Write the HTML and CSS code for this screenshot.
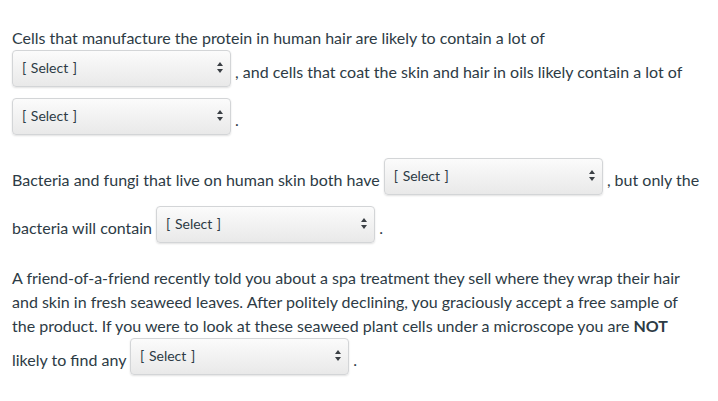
FILE: index.html
```html
<!DOCTYPE html>
<html lang="en">
<head>
<meta charset="utf-8">
<title>Question</title>
<link rel="stylesheet" href="styles.css">
</head>
<body>
<div class="question">
  <p>Cells that manufacture the protein in human hair are likely to contain a lot of <span class="select"><span class="select-label">[ Select ]</span><svg class="arrows" width="6" height="11" viewBox="0 0 6 11"><path d="M3 0L6 4H0Z"/><path d="M0 7H6L3 11Z"/></svg></span> , and cells that coat the skin and hair in oils likely contain a lot of <span class="select"><span class="select-label">[ Select ]</span><svg class="arrows" width="6" height="11" viewBox="0 0 6 11"><path d="M3 0L6 4H0Z"/><path d="M0 7H6L3 11Z"/></svg></span> .</p>
  <p>Bacteria and fungi that live on human skin both have <span class="select"><span class="select-label">[ Select ]</span><svg class="arrows" width="6" height="11" viewBox="0 0 6 11"><path d="M3 0L6 4H0Z"/><path d="M0 7H6L3 11Z"/></svg></span> , but only the bacteria will contain <span class="select"><span class="select-label">[ Select ]</span><svg class="arrows" width="6" height="11" viewBox="0 0 6 11"><path d="M3 0L6 4H0Z"/><path d="M0 7H6L3 11Z"/></svg></span> .</p>
  <p>A friend-of-a-friend recently told you about a spa treatment they sell where they wrap their hair and skin in fresh seaweed leaves. After politely declining, you graciously accept a free sample of the product. If you were to look at these seaweed plant cells under a microscope you are <strong>NOT</strong> likely to find any <span class="select"><span class="select-label">[ Select ]</span><svg class="arrows" width="6" height="11" viewBox="0 0 6 11"><path d="M3 0L6 4H0Z"/><path d="M0 7H6L3 11Z"/></svg></span> .</p>
</div>
</body>
</html>
```
FILE: styles.css
```css
html, body {
  margin: 0;
  padding: 0;
  background: #ffffff;
}

body {
  font-family: Lato, "Open Sans", sans-serif;
  font-size: 16px;
  line-height: 24px;
  color: #2d3b45;
}

.question {
  padding: 14px 16px 0 12px;
}

.question p {
  margin: 12px 0;
}

.question strong {
  font-weight: 700;
}

.select {
  display: inline-flex;
  justify-content: space-between;
  align-items: flex-start;
  box-sizing: border-box;
  width: 219px;
  height: 37px;
  margin: 0 0 11px;
  padding: 7px 7px 0 9px;
  vertical-align: middle;
  border: 1px solid #d3d5d7;
  border-radius: 4px;
  background: linear-gradient(to bottom, #fbfbfb 0%, #e9e9e9 100%);
  box-shadow: 0 1px 2px rgba(0, 0, 0, 0.12);
  font-size: 14px;
  line-height: 20px;
  color: #2d3b45;
}

.select-label {
  white-space: pre;
  word-spacing: 1px;
}

.arrows {
  margin-top: 4px;
  fill: #3a3f44;
}
```
